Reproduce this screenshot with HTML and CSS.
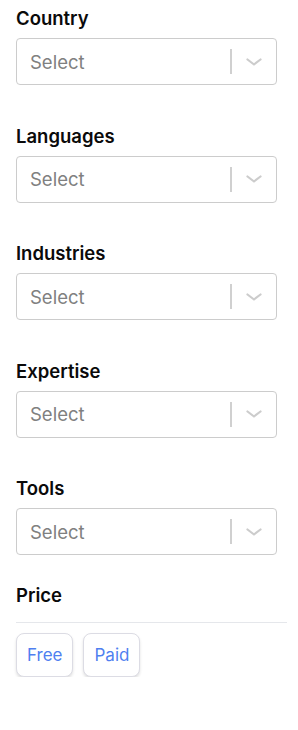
FILE: index.html
```html
<!DOCTYPE html>
<html lang="en">
<head>
  <meta charset="UTF-8" />
  <meta name="viewport" content="width=device-width, initial-scale=1.0"/>
  <title>Filters</title>
  <link rel="stylesheet" href="styles.css">
</head>
<body>

<div class="filters">
  <div class="field">
    <label class="field-label">Country</label>
    <div class="select">
      <span class="placeholder">Select</span>
      <span class="sep"></span>
      <span class="arrow"><svg width="16" height="8" viewBox="0 0 16 8"><path d="M1.5 1.5 L8 6.5 L14.5 1.5" fill="none" stroke="#cccccc" stroke-width="2.2" stroke-linecap="round" stroke-linejoin="round"/></svg></span>
    </div>
  </div>
  <div class="field">
    <label class="field-label">Languages</label>
    <div class="select">
      <span class="placeholder">Select</span>
      <span class="sep"></span>
      <span class="arrow"><svg width="16" height="8" viewBox="0 0 16 8"><path d="M1.5 1.5 L8 6.5 L14.5 1.5" fill="none" stroke="#cccccc" stroke-width="2.2" stroke-linecap="round" stroke-linejoin="round"/></svg></span>
    </div>
  </div>
  <div class="field">
    <label class="field-label">Industries</label>
    <div class="select">
      <span class="placeholder">Select</span>
      <span class="sep"></span>
      <span class="arrow"><svg width="16" height="8" viewBox="0 0 16 8"><path d="M1.5 1.5 L8 6.5 L14.5 1.5" fill="none" stroke="#cccccc" stroke-width="2.2" stroke-linecap="round" stroke-linejoin="round"/></svg></span>
    </div>
  </div>
  <div class="field">
    <label class="field-label">Expertise</label>
    <div class="select">
      <span class="placeholder">Select</span>
      <span class="sep"></span>
      <span class="arrow"><svg width="16" height="8" viewBox="0 0 16 8"><path d="M1.5 1.5 L8 6.5 L14.5 1.5" fill="none" stroke="#cccccc" stroke-width="2.2" stroke-linecap="round" stroke-linejoin="round"/></svg></span>
    </div>
  </div>
  <div class="field last">
    <label class="field-label">Tools</label>
    <div class="select">
      <span class="placeholder">Select</span>
      <span class="sep"></span>
      <span class="arrow"><svg width="16" height="8" viewBox="0 0 16 8"><path d="M1.5 1.5 L8 6.5 L14.5 1.5" fill="none" stroke="#cccccc" stroke-width="2.2" stroke-linecap="round" stroke-linejoin="round"/></svg></span>
    </div>
  </div>

  <div class="price">
    <div class="field-label">Price</div>
    <hr>
    <div class="price-btns">
      <button class="price-btn">Free</button>
      <button class="price-btn">Paid</button>
    </div>
  </div>
</div>

</body>
</html>
```

FILE: styles.css
```css
body { margin: 0; padding: 0; background: white; font-family: Inter, "Noto Sans", Arial, sans-serif; color: #111; }
.filters { padding: 6px 11px 0 16px; }
.field { margin-bottom: 38.5px; }
.field.last { margin-bottom: 27.5px; }
.field-label { display: block; font-size: 18.5px; font-weight: 600; line-height: 24px; margin-bottom: 8px; color: #0a0a0a; }
.select {
  display: flex; align-items: center; box-sizing: border-box;
  width: 261px; height: 47px; border: 1px solid #cccccc; border-radius: 4px; background: white;
}
.placeholder { flex: 1; padding-left: 13px; font-size: 18.5px; color: #808080; }
.sep { width: 2px; height: 25px; background: #d0d0d0; }
.arrow { display: flex; align-items: center; padding: 0 14px 0 14px; height: 100%; }
.price .field-label { margin-bottom: 0; }
.price hr { border: none; border-top: 1px solid #e5e7eb; margin: 15px 0 10px 0; }
.price-btns { display: flex; gap: 10px; }
.price-btn {
  font-family: Inter, "Noto Sans", Arial, sans-serif; font-size: 17px; color: #4f7ff0;
  background: white; border: 1px solid #dcdce4; border-radius: 8px; height: 44px; padding: 0 10px;
  box-shadow: 0 2px 3px rgba(0,0,0,0.12); cursor: pointer;
}
```
